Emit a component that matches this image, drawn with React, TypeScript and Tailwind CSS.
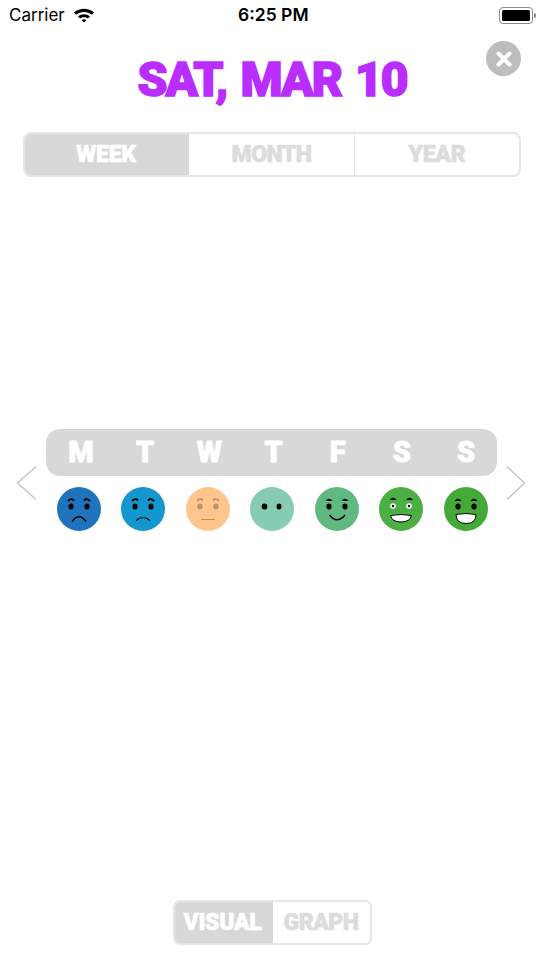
import React from "react";

const display = "font-['Roboto','Liberation_Sans',sans-serif] font-black";

function Eyes({ color = "#000", brow = "arch" }: { color?: string; brow?: "arch" | "none" | "cap" | "flat" }) {
  return (
    <g>
      <ellipse cx="14" cy="19.5" rx="2.6" ry="3" fill={color} />
      <ellipse cx="30" cy="19.5" rx="2.6" ry="3" fill={color} />
      {brow === "arch" && (
        <g fill="none" stroke={color} strokeWidth="2">
          <path d="M11 14Q14 10.5 17 13.5" />
          <path d="M27 13.5Q30 10.5 33 14" />
        </g>
      )}
      {brow === "cap" && (
        <g fill={color}>
          <path d="M10.5 14Q14 9.5 17.5 14Z" />
          <path d="M26.5 14Q30 9.5 33.5 14Z" />
        </g>
      )}
    </g>
  );
}

function Face({ bg, kind }: { bg: string; kind: number }) {
  return (
    <svg width="44" height="44" viewBox="0 0 44 44" className="shrink-0 block">
      <circle cx="22" cy="22" r="22" fill={bg} />
      {kind === 0 && (
        <g>
          <Eyes />
          <path d="M15 34.5Q22 25 29 34.5" fill="none" stroke="#000" strokeWidth="1.3" />
        </g>
      )}
      {kind === 1 && (
        <g>
          <Eyes />
          <path d="M15 33.5Q22 27.5 29 33.5" fill="none" stroke="#000" strokeWidth="1.1" />
        </g>
      )}
      {kind === 2 && (
        <g>
          <Eyes color="#b8926b" />
          <path d="M15 32.5H29" fill="none" stroke="#b8926b" strokeWidth="1" />
        </g>
      )}
      {kind === 3 && (
        <g>
          <ellipse cx="14.5" cy="19.5" rx="2.8" ry="3.1" fill="#000" />
          <ellipse cx="29" cy="19.5" rx="2.5" ry="3.1" fill="#000" />
        </g>
      )}
      {kind === 4 && (
        <g>
          <Eyes brow="cap" />
          <path d="M14.5 28Q22 37.5 30 28" fill="none" stroke="#000" strokeWidth="1.5" />
        </g>
      )}
      {kind === 5 && (
        <g>
          <g fill="#000">
            <path d="M10.5 13Q14 8.5 17.5 13Z" />
            <path d="M27 13Q30.5 8.5 34 13Z" />
          </g>
          <circle cx="14" cy="19" r="2.8" fill="#fff" />
          <circle cx="30" cy="19" r="2.8" fill="#fff" />
          <circle cx="14" cy="19" r="1.2" fill="#000" />
          <circle cx="30" cy="19" r="1.2" fill="#000" />
          <path d="M11.5 28.5Q22 26.5 32.5 28.5Q31 35 22 35Q13 35 11.5 28.5Z" fill="#fff" stroke="#000" strokeWidth="1" />
        </g>
      )}
      {kind === 6 && (
        <g>
          <Eyes brow="cap" />
          <path d="M12 27.5Q22 25.5 32 27.5Q32 36.5 22 36.5Q12 36.5 12 27.5Z" fill="#fff" stroke="#000" strokeWidth="1" />
        </g>
      )}
    </svg>
  );
}

function Chevron({ right }: { right?: boolean }) {
  return (
    <svg width="22" height="36" viewBox="0 0 22 36" className="block shrink-0">
      <path
        d={right ? "M2 1.5L19.5 18L2 34.5" : "M20 1.5L1.5 18L20 34.5"}
        fill="none"
        stroke="#c4c4c4"
        strokeWidth="1.4"
      />
    </svg>
  );
}

const days = ["M", "T", "W", "T", "F", "S", "S"];
const faces = ["#1f73bd", "#1397cc", "#fec68c", "#86cbb2", "#60b981", "#4caf44", "#43aa38"];

export default function App() {
  return (
    <div className="w-[544px] h-[967px] bg-white flex flex-col overflow-hidden relative font-['Liberation_Sans',sans-serif]">
      {/* Status bar */}
      <div className="h-[30px] flex items-center justify-between pl-[9px] pr-[8px] text-black relative font-['Inter',sans-serif]">
        <div className="flex items-center gap-[8px]">
          <span className="text-[17px] leading-none">Carrier</span>
          <svg width="22" height="16" viewBox="0 0 22 16" className="block">
            <path d="M1 5.5C6.5 0.5 15.5 0.5 21 5.5L18.8 7.8C14.5 4 7.5 4 3.2 7.8Z" />
            <path d="M5 9.4C8.5 6.4 13.5 6.4 17 9.4L14.9 11.5C12.7 9.7 9.3 9.7 7.1 11.5Z" />
            <path d="M8.6 13C10 12 12 12 13.4 13L11 15.5Z" />
          </svg>
        </div>
        <span className="absolute left-[238px] text-[17.5px] leading-none font-semibold">6:25 PM</span>
        <div className="flex items-center">
          <div className="w-[34px] h-[17px] rounded-[4px] border border-[#8a8a8a] p-[2px]">
            <div className="w-full h-full bg-black rounded-[1.5px]" />
          </div>
          <div className="ml-[1px] w-[2px] h-[5px] bg-[#8a8a8a] rounded-r-[2px]" />
        </div>
      </div>

      {/* Close */}
      <div className="absolute left-[486px] top-[41px] w-[35px] h-[35px] rounded-full bg-[#bcbdbf] flex items-center justify-center">
        <svg width="16" height="16" viewBox="0 0 16 16">
          <path d="M2.5 2.5L13.5 13.5M13.5 2.5L2.5 13.5" stroke="#fff" strokeWidth="4" strokeLinecap="round" />
        </svg>
      </div>

      {/* Title */}
      <h1
        className={`mt-[21px] h-[58px] flex items-center justify-center text-[48px] leading-none text-[#b92dff] tracking-[-2px] [word-spacing:4px] [-webkit-text-stroke:1.5px_#b92dff] ${display}`}
      >
        SAT, MAR 10
      </h1>

      {/* Range segmented control */}
      <div className="mt-[23px] mx-[23px] h-[45px] flex rounded-[8px] border-2 border-[#e6e6e6] overflow-hidden">
        <div className={`w-[166px] bg-[#d8d8d8] -ml-[2px] -my-[2px] pt-[2px] flex items-center justify-center text-white text-[23px] tracking-[-0.2px] [-webkit-text-stroke:0.6px_#fff] ${display}`}>
          WEEK
        </div>
        <div className={`w-[166px] -my-[2px] pt-[2px] flex items-center justify-center text-[#dcdcdc] text-[23px] tracking-[-0.5px] [-webkit-text-stroke:0.6px_#dcdcdc] border-r border-[#e6e6e6] ${display}`}>
          MONTH
        </div>
        <div className={`flex-1 -my-[2px] pt-[2px] flex items-center justify-center text-[#dcdcdc] text-[23px] tracking-[-0.3px] [-webkit-text-stroke:0.6px_#dcdcdc] ${display}`}>
          YEAR
        </div>
      </div>

      {/* Week */}
      <div className="mt-[252px] flex pl-[16px]">
        <div className="pt-[36px]">
          <Chevron />
        </div>
        <div className="w-[451px] ml-[8px]">
          <div className="h-[47px] rounded-[14px] bg-[#d8d8d8] flex pl-[13px]">
            {days.map((d, i) => (
              <div
                key={i}
                className={`w-[44px] mr-[20.2px] shrink-0 flex items-center justify-center text-white text-[29px] [-webkit-text-stroke:0.8px_#fff] ${display}`}
              >
                {d}
              </div>
            ))}
          </div>
          <div className="mt-[10.5px] flex gap-[20.5px] pl-[10.5px]">
            {faces.map((c, i) => (
              <Face key={i} bg={c} kind={i} />
            ))}
          </div>
        </div>
        <div className="pt-[36px] ml-[8px]">
          <Chevron right />
        </div>
      </div>

      {/* Bottom segmented control */}
      <div className="mt-auto mb-[22px] mx-auto w-[199px] h-[45px] flex rounded-[7px] border-2 border-[#e6e6e6] overflow-hidden">
        <div className={`w-[100px] bg-[#d8d8d8] -ml-[2px] -my-[2px] pt-[2px] flex items-center justify-center text-white text-[23px] tracking-[-0.3px] [-webkit-text-stroke:0.6px_#fff] ${display}`}>
          VISUAL
        </div>
        <div className={`flex-1 -my-[2px] pt-[2px] flex items-center justify-center text-[#dcdcdc] text-[23px] tracking-[-0.5px] [-webkit-text-stroke:0.6px_#dcdcdc] ${display}`}>
          GRAPH
        </div>
      </div>
    </div>
  );
}
